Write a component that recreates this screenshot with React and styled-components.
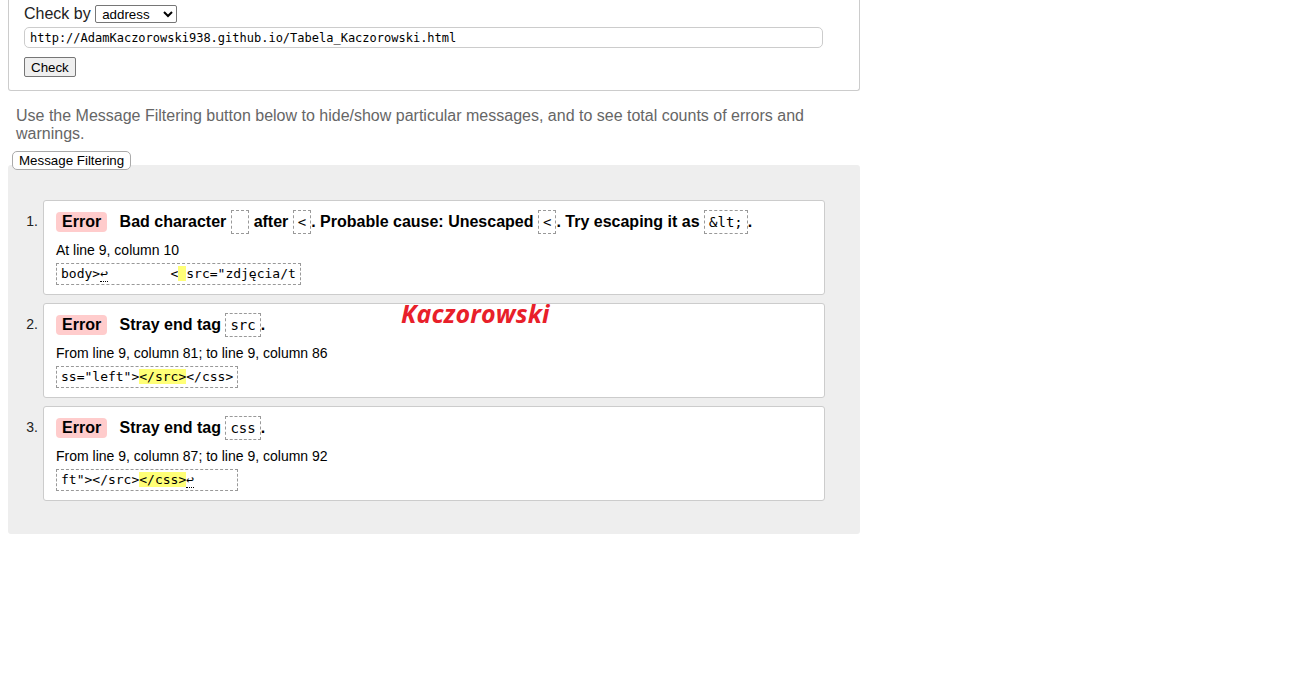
import React from "react";
import styled, { createGlobalStyle } from "styled-components";

const Global = createGlobalStyle`
  html, body { margin: 0; padding: 0; background: #fff; }
  body { font-family: "Liberation Sans", Arial, sans-serif; color: #000; }
`;

const Page = styled.div`
  position: relative;
  width: 852px;
  margin-left: 8px;
`;

const FormBox = styled.div`
  border: 1px solid #ccc;
  border-top: none;
  border-radius: 0 0 3px 3px;
  padding: 5px 15px 13px 15px;
`;

const CheckRow = styled.div`
  display: flex;
  align-items: center;
  height: 18px;
  font-size: 16px;
  color: #222;
  white-space: pre;
`;

const Select = styled.select`
  font-family: "Liberation Sans", Arial, sans-serif;
  font-size: 13.33px;
  height: 18px;
  width: 82px;
  padding: 0 0 0 2px;
  border: 1px solid #767676;
  border-radius: 2px;
  background: #fff;
  color: #000;
`;

const UrlInput = styled.input`
  display: block;
  box-sizing: border-box;
  margin-top: 4px;
  width: 799px;
  height: 21px;
  padding: 0 5px;
  border: 1px solid #ccc;
  border-radius: 5px;
  font-family: "DejaVu Sans Mono", monospace;
  font-size: 12px;
  color: #000;
  outline: none;
`;

const Button = styled.button`
  display: block;
  box-sizing: border-box;
  height: ${(p) => p.$h || 20}px;
  margin-top: ${(p) => p.$mt || 0}px;
  margin-left: ${(p) => p.$ml || 0}px;
  padding: 0 ${(p) => p.$px || 6}px;
  font-family: "Liberation Sans", Arial, sans-serif;
  font-size: 13.33px;
  color: #000;
  background: ${(p) => p.$bg || "#efefef"};
  border: 1px solid ${(p) => p.$bc || "#767676"};
  border-radius: ${(p) => p.$r || 2}px;
  position: relative;
  z-index: 1;
`;

const Intro = styled.p`
  margin: 16px 0 0 8px;
  width: 836px;
  font-size: 16px;
  line-height: 18px;
  color: #666;
`;

const Results = styled.div`
  margin-top: -5px;
  background: #eee;
  border-radius: 3px;
  padding: 35px 35px 33px 10px;
`;

const List = styled.ol`
  list-style: none;
  margin: 0;
  padding: 0;
  display: flex;
  flex-direction: column;
  gap: 8px;
`;

const Item = styled.li`
  display: flex;
  align-items: flex-start;
  gap: 5px;
`;

const Num = styled.span`
  width: 20px;
  flex: none;
  text-align: right;
  padding-top: 12px;
  font-size: 14px;
  line-height: 18px;
  color: #222;
`;

const Card = styled.div`
  flex: 1;
  background: #fff;
  border: 1px solid #ccc;
  border-radius: 3px;
  padding: 8px 12px 9px 12px;
`;

const MsgLine = styled.div`
  font-size: 16px;
  font-weight: bold;
  line-height: 26px;
  height: 26px;
  white-space: nowrap;
  color: #000;
`;

const Badge = styled.span`
  display: inline-block;
  background: #fcc;
  border-radius: 4px;
  padding: 0 6px;
  line-height: 20px;
  margin-right: 8px;
  color: #000;
`;

const Code = styled.code`
  font-family: "DejaVu Sans Mono", monospace;
  font-weight: normal;
  font-size: 14px;
  border: 1px dashed #999;
  padding: 3px 4px;
  white-space: pre;
`;

const Location = styled.div`
  margin-top: 6px;
  font-size: 14px;
  line-height: 18px;
  color: #000;
`;

const Extract = styled.pre`
  margin: 4px 0 0 0;
  width: fit-content;
  border: 1px dashed #999;
  padding: 2px 4px;
  font-family: "DejaVu Sans Mono", monospace;
  font-size: 13px;
  line-height: 16px;
  color: #000;
`;

const Mark = styled.mark`
  background: #ff7;
  color: #000;
`;

const LineFeed = styled.b`
  font-weight: normal;
  border-bottom: 1px dotted #000;
`;

const Signature = styled.div`
  position: absolute;
  left: 393px;
  top: 296px;
  font-family: "Open Sans", sans-serif;
  font-style: italic;
  font-weight: 700;
  font-size: 25px;
  color: #e8202a;
  letter-spacing: 0.2px;
`;

const messages = [
  {
    msg: (
      <>
        Bad character <Code> </Code> after <Code>&lt;</Code>. Probable cause: Unescaped{" "}
        <Code>&lt;</Code>. Try escaping it as <Code>&amp;lt;</Code>.
      </>
    ),
    loc: "At line 9, column 10",
    extract: (
      <>
        body&gt;<LineFeed>↩</LineFeed>{"        <"}<Mark> </Mark>src="zdjęcia/t
      </>
    ),
  },
  {
    msg: (
      <>
        Stray end tag <Code>src</Code>.
      </>
    ),
    loc: "From line 9, column 81; to line 9, column 86",
    extract: (
      <>
        ss="left"&gt;<Mark>&lt;/src&gt;</Mark>&lt;/css&gt;
      </>
    ),
  },
  {
    msg: (
      <>
        Stray end tag <Code>css</Code>.
      </>
    ),
    loc: "From line 9, column 87; to line 9, column 92",
    extract: (
      <>
        ft"&gt;&lt;/src&gt;<Mark>&lt;/css&gt;</Mark><LineFeed>↩</LineFeed>{"     "}
      </>
    ),
  },
];

export default function App() {
  return (
    <>
      <Global />
      <Page>
        <FormBox>
          <CheckRow>
            {"Check by "}
            <Select defaultValue="address">
              <option value="address">address</option>
              <option value="file">file upload</option>
              <option value="text">text input</option>
            </Select>
          </CheckRow>
          <UrlInput readOnly value="http://AdamKaczorowski938.github.io/Tabela_Kaczorowski.html" />
          <Button $mt={9}>Check</Button>
        </FormBox>
        <Intro>
          Use the Message Filtering button below to hide/show particular messages, and to see total counts of errors and warnings.
        </Intro>
        <Button $mt={8} $ml={4} $h={19} $bg="#fff" $bc="#aaa" $r={5}>
          Message Filtering
        </Button>
        <Results>
          <List>
            {messages.map((m, i) => (
              <Item key={i}>
                <Num>{i + 1}.</Num>
                <Card>
                  <MsgLine>
                    <Badge>Error</Badge> {m.msg}
                  </MsgLine>
                  <Location>{m.loc}</Location>
                  <Extract>{m.extract}</Extract>
                </Card>
              </Item>
            ))}
          </List>
        </Results>
        <Signature>Kaczorowski</Signature>
      </Page>
    </>
  );
}
